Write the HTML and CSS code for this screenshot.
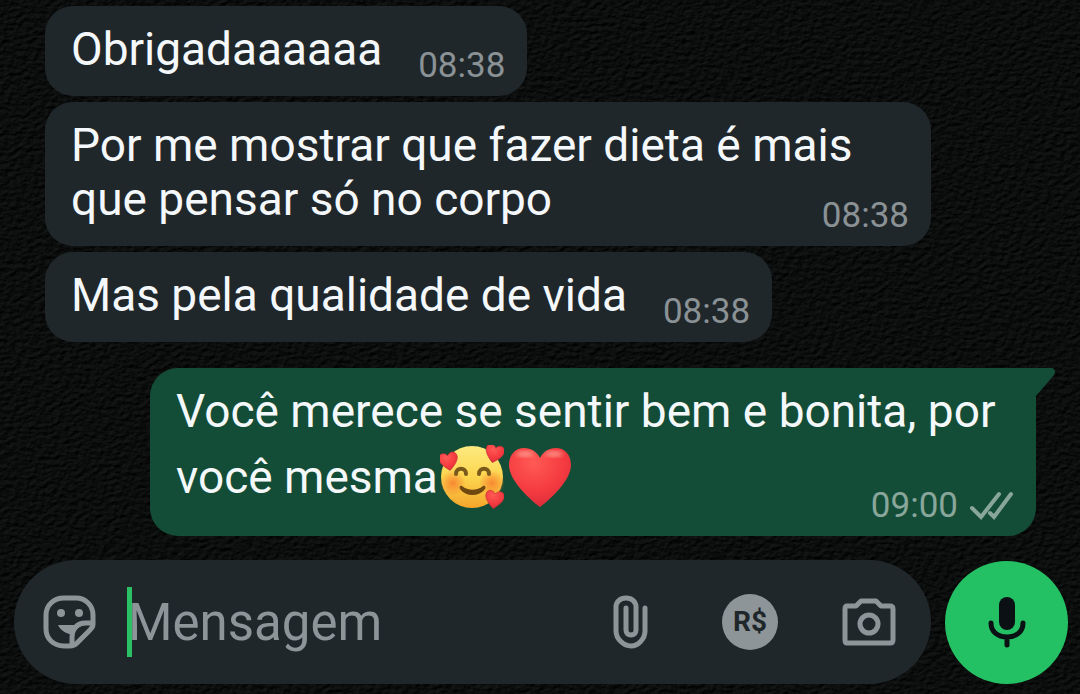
FILE: index.html
```
<!DOCTYPE html>
<html lang="pt-BR">
<head>
  <meta charset="UTF-8" />
  <meta name="viewport" content="width=device-width, initial-scale=1.0" />
  <title>Conversa</title>
  <link rel="stylesheet" href="styles.css">
</head>
<body>

  <!-- wallpaper -->
  <svg class="wallpaper" aria-hidden="true">
    <filter id="grain" x="0" y="0" width="100%" height="100%" color-interpolation-filters="sRGB">
      <feTurbulence type="fractalNoise" baseFrequency="0.16 0.24" numOctaves="4" seed="8" result="noise" />
      <feDiffuseLighting in="noise" surfaceScale="2" diffuseConstant="1" lighting-color="#151917">
        <feDistantLight azimuth="235" elevation="34" />
      </feDiffuseLighting>
    </filter>
    <rect width="100%" height="100%" filter="url(#grain)" />
  </svg>

  <main class="chat">
    <div class="message">
      <span class="text">Obrigadaaaaaa</span>
      <span class="meta"><time>08:38</time></span>
    </div>

    <div class="message">
      <span class="text">Por me mostrar que fazer dieta é mais que pensar só no corpo</span>
      <span class="meta"><time>08:38</time></span>
    </div>

    <div class="message">
      <span class="text">Mas pela qualidade de vida</span>
      <span class="meta"><time>08:38</time></span>
    </div>

    <div class="message sent">
      <span class="text">Você merece se sentir bem e bonita, por você mesma<svg class="emoji" viewBox="0 0 64 64" role="img" aria-label="Rosto sorridente com corações">
          <defs>
            <linearGradient id="face" x1="0" y1="0" x2="0" y2="1">
              <stop offset="0" stop-color="#fdea80" />
              <stop offset="0.5" stop-color="#fcd64e" />
              <stop offset="1" stop-color="#f3a52b" />
            </linearGradient>
            <radialGradient id="blush">
              <stop offset="0" stop-color="#f7782c" stop-opacity="0.8" />
              <stop offset="1" stop-color="#f7782c" stop-opacity="0" />
            </radialGradient>
            <radialGradient id="red" cx="0.4" cy="0.25" r="0.8">
              <stop offset="0" stop-color="#ff5a55" />
              <stop offset="0.6" stop-color="#f53b40" />
              <stop offset="1" stop-color="#d92b39" />
            </radialGradient>
            <path id="heart" d="M32 62C29 60 1 38 1 20C1 9 8 3 16 3C23 3 29 7 32 13C35 7 41 3 48 3C56 3 63 9 63 20C63 38 35 60 32 62Z" />
          </defs>
          <circle cx="32" cy="32" r="31" fill="url(#face)" />
          <circle cx="13" cy="38" r="13" fill="url(#blush)" />
          <circle cx="52" cy="38" r="13" fill="url(#blush)" />
          <g fill="none" stroke="#7a5a1c" stroke-width="4" stroke-linecap="round">
            <path d="M16 29C16 22 26 22 26 29" />
            <path d="M39 29C39 22 49 22 49 29" />
          </g>
          <path d="M22 41C28 46 37 46 43 41C45 40 46 42 45 44C39 52 26 52 20 44C19 42 20 40 22 41Z" fill="#6f480f" />
          <g fill="url(#red)" stroke="#c42f35" stroke-width="2">
            <use href="#heart" transform="translate(-1 7) rotate(-10 9 9) scale(.3)" />
            <use href="#heart" transform="translate(45 -1) rotate(14 9 9) scale(.3)" />
            <use href="#heart" transform="translate(45 45) rotate(8 9 9) scale(.3)" />
          </g>
        </svg><svg class="emoji" viewBox="0 0 64 64" role="img" aria-label="Coração vermelho">
          <defs>
            <filter id="soft"><feGaussianBlur stdDeviation="2" /></filter>
          </defs>
          <use href="#heart" fill="url(#red)" />
          <g fill="#ffb9a8" opacity="0.6" filter="url(#soft)">
            <ellipse cx="17" cy="9" rx="9" ry="3" />
            <ellipse cx="46" cy="9" rx="9" ry="3" />
          </g>
        </svg></span>
      <span class="meta">
        <time>09:00</time>
        <svg class="checks" viewBox="0 0 46 32" role="img" aria-label="Entregue">
          <path d="M4 18L13 27L31 4M22 23L26 27L43 4" />
        </svg>
      </span>
      <svg class="tail" viewBox="0 0 20 28" aria-hidden="true">
        <path d="M0 0H15C19 0 20 4 18 7L0 28Z" />
      </svg>
    </div>
  </main>

  <form class="composer">
    <div class="bar">
      <button type="button" class="icon" aria-label="Figurinhas">
        <svg viewBox="0 0 60 60">
          <path class="line" d="M53 32V23C53 13 45 6 36 6H24C14 6 6 13 6 23V37C6 47 14 54 24 54H30C33 54 35 53 37 51L49 39C52 36 53 35 53 32Z" />
          <path class="line" d="M32 53V46C32 37 37 31 45 31H53" />
          <path class="fill" d="M18 33H46C39 34 35 38 34 43C26 42 20 38 18 33Z" />
          <circle class="fill" cx="21" cy="21" r="4" />
          <circle class="fill" cx="39" cy="21" r="4" />
        </svg>
      </button>
      <span class="caret"></span>
      <input type="text" class="field" placeholder="Mensagem" aria-label="Mensagem" />
      <button type="button" class="icon" aria-label="Anexar">
        <svg viewBox="0 0 60 60">
          <path class="line clip" d="M44 16V39C44 47 37 54 30 54S15 47 15 39V15C15 10 19 6 25 6S35 10 35 15V38C35 41 33 43 30 43S25 41 25 38V16" />
        </svg>
      </button>
      <button type="button" class="icon" aria-label="Pagamento">
        <span class="money">R$</span>
      </button>
      <button type="button" class="icon" aria-label="Câmera">
        <svg viewBox="0 0 60 60">
          <path class="line" d="M8 14H17L22 9H37L42 14H51C53 14 54 15 54 17V48C54 50 53 51 51 51H8C6 51 6 50 6 48V17C6 15 6 14 8 14Z" />
          <circle class="line" cx="30" cy="32" r="9" />
        </svg>
      </button>
    </div>
    <button type="button" class="mic" aria-label="Gravar áudio">
      <svg viewBox="0 0 60 60">
        <rect x="22" y="4" width="16" height="33" rx="8" fill="#0b1014" />
        <path d="M14 30C14 39 21 44 30 44S46 39 46 30M30 44V52" />
      </svg>
    </button>
  </form>

</body>
</html>
```
FILE: styles.css
```
* {
  box-sizing: border-box;
}

body {
  margin: 0;
  min-height: 100vh;
  display: flex;
  flex-direction: column;
  background-color: #0a0d0c;
  color: #f4f8fa;
  font-family: Roboto, sans-serif;
}

.wallpaper {
  position: fixed;
  top: 0;
  left: 0;
  width: 100%;
  height: 100%;
  z-index: -1;
}


.chat {
  flex: 1;
  display: flex;
  flex-direction: column;
  align-items: flex-start;
  gap: 6px;
  padding: 6px 44px 24px 45px;
}

.message {
  position: relative;
  max-width: 886px;
  padding: 16px 22px 9px 26px;
  border-radius: 28px;
  background-color: #20272b;
  font-size: 46px;
  line-height: 54px;
}

/* floats onto the last line of the text when there is room */
.meta {
  float: right;
  display: flex;
  align-items: center;
  gap: 10px;
  margin: 23px 0 0 36px;
  color: #8b9296;
  font-size: 35px;
  line-height: 42px;
}

.message::after {
  content: "";
  display: block;
  clear: both;
}

.message.sent {
  align-self: flex-end;
  margin-top: 20px;
  border-top-right-radius: 0;
  background-color: #144d37;
}

.sent .meta {
  margin-top: 47px;
  color: #89a69b;
}

.emoji {
  width: 64px;
  height: 64px;
  margin: 7px 2px 6px;
  vertical-align: -22px;
}

.checks {
  width: 46px;
  height: 32px;
  fill: none;
  stroke: #89a69b;
  stroke-width: 4;
  stroke-linecap: round;
}

.tail {
  position: absolute;
  top: 0;
  left: 100%;
  width: 20px;
  height: 28px;
  fill: #144d37;
}


.composer {
  display: flex;
  align-items: flex-end;
  gap: 14px;
  padding: 0 12px 10px 14px;
}

.bar {
  flex: 1;
  min-width: 0;
  height: 124px;
  display: flex;
  align-items: center;
  padding: 0 32px 0 26px;
  border-radius: 62px;
  background-color: #20272b;
}

.bar .icon + .icon {
  margin-left: 59px;
}

.icon {
  flex: none;
  width: 60px;
  height: 60px;
  padding: 0;
  border: 0;
  background: none;
  cursor: pointer;
}

.icon svg {
  display: block;
  width: 60px;
  height: 60px;
}

.line {
  fill: none;
  stroke: #8d9599;
  stroke-width: 5;
  stroke-linejoin: round;
}

.clip {
  stroke-linecap: round;
}

.fill {
  fill: #8d9599;
}

.money {
  display: block;
  width: 56px;
  height: 56px;
  margin: 0 auto;
  border-radius: 50%;
  background-color: #8d9599;
  color: #20272b;
  font: 700 28px/56px Roboto, sans-serif;
  text-align: center;
}

.caret {
  flex: none;
  width: 5px;
  height: 70px;
  margin: 0 -4px 0 27px;
  background-color: #2bc065;
}

.field {
  flex: 1;
  min-width: 0;
  height: 70px;
  padding: 0;
  border: 0;
  outline: 0;
  background: none;
  color: #f4f8fa;
  font: 51px Roboto, sans-serif;
}

.field::placeholder {
  color: #8d9599;
  opacity: 1;
}

.mic {
  flex: none;
  width: 123px;
  height: 123px;
  padding: 0;
  border: 0;
  border-radius: 50%;
  background-color: #23c163;
  cursor: pointer;
}

.mic svg {
  display: block;
  width: 60px;
  height: 60px;
  margin: 0 auto;
  fill: none;
  stroke: #0b1014;
  stroke-width: 5;
  stroke-linecap: round;
}

.mic rect {
  stroke: none;
}
```
